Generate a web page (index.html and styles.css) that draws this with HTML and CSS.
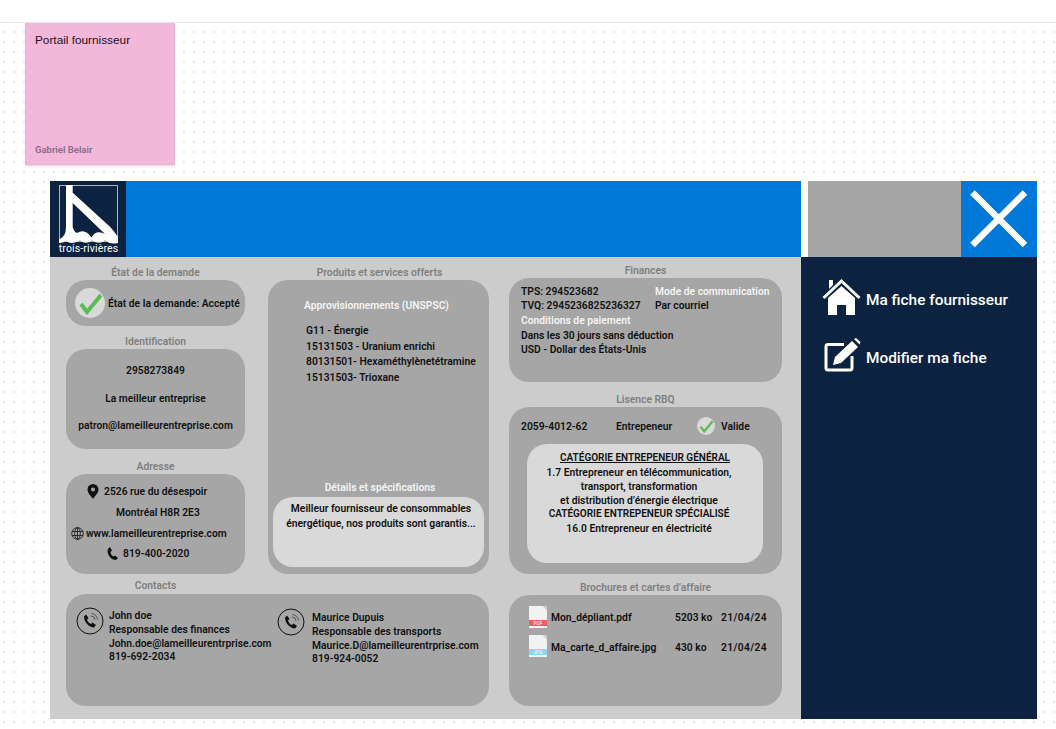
FILE: index.html
```html
<!DOCTYPE html>
<html lang="fr">
<head>
  <meta charset="UTF-8">
  <meta name="viewport" content="width=device-width, initial-scale=1.0">
  <title>Portail fournisseur</title>
  <link rel="stylesheet" href="styles.css">
</head>
<body>
  <div class="topbar"></div>

  <div class="sticky">
    <div class="sticky-title">Portail fournisseur</div>
    <div class="sticky-author">Gabriel Belair</div>
  </div>

  <div class="app">
    <header class="app-header">
      <div class="logo">
        <svg width="76" height="76" viewBox="0 0 76 76">
          <rect x="9.5" y="4.5" width="58" height="56" fill="none" stroke="#a9b2bf"/>
          <path d="M16 4 H22.7 V11.7 L60 45.700 Q64 50 68 56 V62 Q61 64 55 59.500 Q49 64 42 59.500 Q36 64 30 59.500 Q22 64 16 60 Q13 62 9 62 V58 Q16 56 16 46 Z" fill="#fff"/>
          <path d="M22.7 22 L55 53 Q46 48 41.500 56.500 Q35 47 27 52 Q24 51 22.7 46 Z" fill="#0b2340"/>
          <text x="38.500" y="71" class="logo-text">trois-rivières</text>
        </svg>
      </div>
    </header>
    <div class="app-tools">
      <div class="tools-fill"></div>
      <div class="close-btn">
        <svg width="76" height="76" viewBox="0 0 76 76">
          <path d="M11.500 11.500 L64 64 M64 11.500 L11.500 64" stroke="#fff" stroke-width="6.500"/>
        </svg>
      </div>
    </div>

    <main class="content">
      <div class="col col-left">
        <section>
          <h3 class="label">État de la demande</h3>
          <div class="card card-state">
            <svg class="check-icon" width="30" height="30" viewBox="0 0 30 30">
              <circle cx="15" cy="15" r="15" fill="#d9d9d9"/>
              <path d="M6 16 L12 24 L26 7" fill="none" stroke="#5dbb57" stroke-width="4"/>
            </svg>
            <span>État de la demande: Accepté</span>
          </div>
        </section>
        <section class="section-id">
          <h3 class="label">Identification</h3>
          <div class="card card-id">
            <p>2958273849</p>
            <p>La meilleur entreprise</p>
            <p>patron@lameilleurentreprise.com</p>
          </div>
        </section>
        <section class="section-address">
          <h3 class="label">Adresse</h3>
          <div class="card card-address">
            <div class="addr-row addr-street">
              <svg width="12" height="15" viewBox="0 0 12 15">
                <path d="M6 0 A5.500 5.500 0 0 0 .5 5.500 C.5 9 4 12 6 15 C8 12 11.500 9 11.500 5.500 A5.500 5.500 0 0 0 6 0 Z" fill="#111"/>
                <circle cx="6" cy="5.500" r="2" fill="#a6a6a6"/>
              </svg>
              <span>2526 rue du désespoir</span>
            </div>
            <div class="addr-row addr-city"><span>Montréal H8R 2E3</span></div>
            <div class="addr-row addr-web">
              <svg width="13" height="13" viewBox="0 0 13 13" fill="none" stroke="#111" stroke-width=".8">
                <circle cx="6.500" cy="6.500" r="5.800"/>
                <ellipse cx="6.500" cy="6.500" rx="2.800" ry="5.800"/>
                <path d="M6.500 .7 V12.300 M1 4.500 H12 M1 8.500 H12"/>
              </svg>
              <span>www.lameilleurentreprise.com</span>
            </div>
            <div class="addr-row addr-phone">
              <svg width="11" height="13" viewBox="0 0 11 13">
                <path d="M3 0 L5 3.500 L3.500 5 C3.500 7 5 9 6.500 9.500 L8 8.500 L11 11 L9 13 C4 13 .5 8 .5 3.500 Q.5 1.500 3 0 Z" fill="#111"/>
              </svg>
              <span>819-400-2020</span>
            </div>
          </div>
        </section>
      </div>

      <div class="col col-middle">
        <section>
          <h3 class="label label-products">Produits et services offerts</h3>
          <div class="card card-products">
            <h4 class="heading-light heading-unspsc">Approvisionnements (UNSPSC)</h4>
            <ul class="unspsc-list">
              <li>G11 - Énergie</li>
              <li>15131503 - Uranium enrichi</li>
              <li>80131501- Hexaméthylènetétramine</li>
              <li>15131503- Trioxane</li>
            </ul>
            <h4 class="heading-light heading-details">Détails et spécifications</h4>
            <div class="details-box">
              Meilleur fournisseur de consommables<br>énergétique, nos produits sont garantis...
            </div>
          </div>
        </section>
      </div>

      <div class="col col-right">
        <section>
          <h3 class="label">Finances</h3>
          <div class="card card-finance">
            <div class="finance-top">
              <div>
                <p>TPS: 294523682</p>
                <p>TVQ: 2945236825236327</p>
              </div>
              <div>
                <p class="light">Mode de communication</p>
                <p>Par courriel</p>
              </div>
            </div>
            <p class="light finance-terms">Conditions de paiement</p>
            <p>Dans les 30 jours sans déduction</p>
            <p>USD - Dollar des États-Unis</p>
          </div>
        </section>
        <section class="section-rbq">
          <h3 class="label">Lisence RBQ</h3>
          <div class="card card-rbq">
            <div class="rbq-head">
              <span class="rbq-number">2059-4012-62</span>
              <span class="rbq-type">Entrepeneur</span>
              <svg class="rbq-check" width="18" height="18" viewBox="0 0 30 30">
                <circle cx="15" cy="15" r="15" fill="#d9d9d9"/>
                <path d="M6 16 L12 24 L26 7" fill="none" stroke="#5dbb57" stroke-width="4"/>
              </svg>
              <span>Valide</span>
            </div>
            <div class="rbq-box">
              <p class="rbq-title">CATÉGORIE ENTREPENEUR GÉNÉRAL</p>
              <div class="rbq-lines">
                <p>1.7 Entrepreneur en télécommunication,</p>
                <p>transport, transformation</p>
                <p>et distribution d’énergie électrique</p>
                <p class="rbq-caps">CATÉGORIE ENTREPENEUR SPÉCIALISÉ</p>
                <p class="rbq-last">16.0 Entrepreneur en électricité</p>
              </div>
            </div>
          </div>
        </section>
      </div>

      <section class="section-contacts">
        <h3 class="label label-contacts">Contacts</h3>
        <div class="card card-contacts">
          <div class="contact contact-first">
            <svg class="phone-ring" width="28" height="28" viewBox="0 0 28 28">
              <circle cx="14" cy="14" r="13" fill="none" stroke="#111"/>
              <path d="M10 7.500 L12.500 11 L11 12.500 C11.500 14.500 13 16 15 17 L16.500 15.500 L20 18 L18 20.500 C13 20.500 8 15 8 9.500 Z" fill="#111"/>
              <path d="M15 9 A4 4 0 0 1 19 13 M15.500 6.500 A6.500 6.500 0 0 1 21.500 12.500" fill="none" stroke="#333" stroke-width=".7"/>
            </svg>
            <div class="contact-info">
              <p>John doe</p>
              <p>Responsable des finances</p>
              <p>John.doe@lameilleurentrprise.com</p>
              <p>819-692-2034</p>
            </div>
          </div>
          <div class="contact contact-second">
            <svg class="phone-ring" width="28" height="28" viewBox="0 0 28 28">
              <circle cx="14" cy="14" r="13" fill="none" stroke="#111"/>
              <path d="M10 7.500 L12.500 11 L11 12.500 C11.500 14.500 13 16 15 17 L16.500 15.500 L20 18 L18 20.500 C13 20.500 8 15 8 9.500 Z" fill="#111"/>
              <path d="M15 9 A4 4 0 0 1 19 13 M15.500 6.500 A6.500 6.500 0 0 1 21.500 12.500" fill="none" stroke="#333" stroke-width=".7"/>
            </svg>
            <div class="contact-info">
              <p>Maurice Dupuis</p>
              <p>Responsable des transports</p>
              <p>Maurice.D@lameilleurentrprise.com</p>
              <p>819-924-0052</p>
            </div>
          </div>
        </div>
      </section>

      <section class="section-files">
        <h3 class="label">Brochures et cartes d’affaire</h3>
        <div class="card card-files">
          <div class="file-row">
            <div class="file-icon"><span class="file-band band-pdf">PDF</span></div>
            <span>Mon_dépliant.pdf</span>
            <span>5203 ko</span>
            <span class="file-date">21/04/24</span>
          </div>
          <div class="file-row file-row-second">
            <div class="file-icon"><span class="file-band band-jpg">JPG</span></div>
            <span class="file-text">Ma_carte_d_affaire.jpg</span>
            <span class="file-text">430 ko</span>
            <span class="file-date file-text">21/04/24</span>
          </div>
        </div>
      </section>
    </main>

    <nav class="sidenav">
      <a class="nav-item">
        <svg width="40" height="38" viewBox="0 0 40 38">
          <path d="M7 2 H11 V7 L7 11 Z" fill="#fff"/>
          <path d="M1.500 20 L19.500 3 L37.500 20" fill="none" stroke="#fff" stroke-width="3"/>
          <path d="M6 20 L19.500 8 L33 20 V37 H24 V27 H15 V37 H6 Z" fill="#fff"/>
        </svg>
        <span>Ma fiche fournisseur</span>
      </a>
      <a class="nav-item">
        <svg width="40" height="34" viewBox="0 0 40 34">
          <path d="M22 6.500 H6 Q4 6.500 4 8.500 V30 Q4 32 6 32 H28 Q30 32 30 30 V18" fill="none" stroke="#fff" stroke-width="3"/>
          <path d="M11 27 L13 19 L30 3 L36 9 L19 25 Z" fill="#fff"/>
          <path d="M32 1 L34 0 L38.500 4 L37.500 6.500 Z" fill="#fff"/>
        </svg>
        <span>Modifier ma fiche</span>
      </a>
    </nav>
  </div>
</body>
</html>
```

FILE: styles.css
```css
* {
  box-sizing: border-box;
}

body {
  margin: 0;
  height: 729px;
  overflow: hidden;
  font-family: "Roboto", "Liberation Sans", sans-serif;
  font-weight: 600;
  font-size: 10.3px;
  color: #111;
  /* square dots: white stripes over vertical stripes */
  background-color: #fff;
  background-image:
    linear-gradient(to bottom, transparent 2px, #fff 2px),
    linear-gradient(to right, #e6e6e6 2px, transparent 2px);
  background-size: 10px 10px;
  background-position: 0 1px, 3px 0;
}

p, h3, h4, ul {
  margin: 0;
  padding: 0;
}

.topbar {
  height: 23px;
  background: #fff;
  border-bottom: 1px solid #e3e3e3;
}

.sticky {
  width: 150px;
  height: 142px;
  margin-left: 25px;
  padding: 10px 9px 8px;
  display: flex;
  flex-direction: column;
  justify-content: space-between;
  background: #f3b8d9;
  border: 1px solid #ecb0d2;
  border-top: none;
  box-shadow: 0 3px 2px -1px #e8e8e8;
}

.sticky-title {
  font-family: "Liberation Sans", Arial, sans-serif;
  font-weight: 400;
  font-size: 11.8px;
  line-height: 14px;
  color: #1a1020;
}

.sticky-author {
  font-size: 9.5px;
  line-height: 12px;
  color: #8a6a88;
}

.app {
  display: grid;
  grid-template-columns: 751px 236px;
  grid-template-rows: 76px 462px;
  width: 987px;
  margin: 16px 0 0 50px;
}

.app-header {
  background: #0078d7;
}

.logo {
  width: 76px;
  height: 76px;
  background: #0b2340;
}

.logo svg {
  display: block;
}

.logo-text {
  font-family: "Roboto", sans-serif;
  font-size: 10.5px;
  font-weight: 400;
  letter-spacing: .15px;
  fill: #fff;
  text-anchor: middle;
}

.app-tools {
  display: flex;
  padding-left: 7px;
  background: #fff;
}

.tools-fill {
  flex: 1;
  background: #a6a6a6;
}

.close-btn {
  width: 76px;
  height: 76px;
  background: #0078d7;
}

.close-btn svg {
  display: block;
}

.content {
  display: grid;
  grid-template-columns: 182px 221px 273px;
  column-gap: 20px;
  row-gap: 5px;
  grid-template-rows: 311px 127px;
  align-items: end;
  padding: 6px 0 13px 16px;
  background: #ccc;
}

.col-left {
  padding-right: 3px;
}

.label {
  height: 15px;
  font-size: 10.3px;
  font-weight: 600;
  line-height: 16px;
  text-align: center;
  color: #7f7f7f;
}

.label-products {
  padding-left: 2px;
}

.card {
  background: #a6a6a6;
  border-radius: 20px;
}

.card-state {
  display: flex;
  align-items: center;
  height: 46px;
  padding-left: 9px;
  gap: 3px;
}

.section-id {
  margin-top: 8px;
}

.card-id {
  height: 100px;
  padding-top: 15px;
  text-align: center;
}

.card-id p {
  line-height: 14px;
  margin-bottom: 13.5px;
}

.section-address {
  margin-top: 10px;
}

.card-address {
  height: 100px;
  padding-top: 10px;
}

.addr-row {
  display: flex;
  align-items: center;
  height: 14px;
  margin-bottom: 7px;
}

.addr-street {
  padding-left: 21px;
  gap: 5px;
}

.addr-city {
  padding-left: 50px;
}

.addr-web {
  padding-left: 5px;
  gap: 2px;
}

.addr-phone {
  padding-left: 41px;
  gap: 5px;
  margin-top: -1px;
}

.card-products {
  display: flex;
  flex-direction: column;
  height: 294px;
  padding: 18px 5px 7px;
}

.heading-light {
  font-size: 10.3px;
  font-weight: 600;
  line-height: 15px;
  color: #f4f4f4;
}

.heading-unspsc {
  padding-left: 31px;
}

.unspsc-list {
  list-style: none;
  margin-top: 10px;
  padding-left: 33px;
  line-height: 15.6px;
}

.heading-details {
  margin-top: auto;
  text-align: center;
  padding-left: 3px;
}

.details-box {
  height: 70px;
  margin-top: 2px;
  padding-top: 5px;
  padding-left: 5px;
  border-radius: 20px;
  background: #d9d9d9;
  line-height: 14.5px;
  text-align: center;
}

.card-finance {
  height: 104px;
  padding: 7px 12px;
  line-height: 14.2px;
}

.finance-top {
  display: grid;
  grid-template-columns: 134px 1fr;
  white-space: nowrap;
}

.finance-terms {
  margin-top: 1px;
}

.light {
  color: #f4f4f4;
}

.section-rbq {
  margin-top: 10px;
}

.card-rbq {
  height: 167px;
  padding: 11px 19px 11px 18px;
}

.rbq-head {
  display: flex;
  align-items: center;
  height: 16px;
  margin-left: -6px;
}

.rbq-number {
  width: 95px;
}

.rbq-type {
  width: 81px;
}

.rbq-check {
  margin-right: 6px;
}

.rbq-box {
  height: 119px;
  margin-top: 10px;
  padding-top: 7px;
  border-radius: 20px;
  background: #d9d9d9;
  text-align: center;
  line-height: 14px;
}

.rbq-title {
  font-size: 10px;
  text-decoration: underline;
}

.rbq-lines {
  margin-top: 1px;
  padding-right: 12px;
  line-height: 13.8px;
}

.rbq-caps {
  font-size: 10px;
}

.rbq-last {
  margin-top: 1px;
}

.section-contacts {
  grid-column: 1 / 3;
}

.label-contacts {
  width: 179px;
  line-height: 13px;
}

.card-contacts {
  display: flex;
  height: 112px;
}

.contact {
  display: flex;
  gap: 5px;
  padding-left: 10px;
}

.contact-first {
  width: 211px;
  padding-top: 13px;
}

.contact-second {
  padding-left: 0;
  padding-top: 14px;
  gap: 7px;
}

.phone-ring {
  flex-shrink: 0;
}

.contact-info {
  padding-top: 2px;
  line-height: 13.8px;
}

.contact-second .contact-info {
  padding-top: 3px;
}

.card-files {
  height: 111px;
  padding: 11px 14px 0 20px;
}

.file-row {
  display: grid;
  grid-template-columns: 18px 120px 42px 1fr;
  column-gap: 4px;
  align-items: center;
  height: 22px;
  margin-bottom: 7px;
}

.file-text {
  padding-top: 3px;
}

.file-date {
  letter-spacing: .35px;
}

.file-icon {
  position: relative;
  width: 18px;
  height: 22px;
  background: linear-gradient(225deg, #ccc 0, #ccc 3px, #f2f2f2 3px);
}

.file-band {
  position: absolute;
  left: 0;
  right: 0;
  top: 14px;
  height: 6px;
  font-size: 5px;
  line-height: 6px;
  text-align: center;
  color: #f6d8da;
}

.band-pdf {
  background: #ee5d68;
}

.band-jpg {
  background: #93d1f5;
  color: #e2f3fc;
}

.sidenav {
  display: flex;
  flex-direction: column;
  padding: 21px 0 0 21px;
  background: #0b2340;
}

.nav-item {
  display: flex;
  align-items: center;
  gap: 4px;
  height: 38px;
  margin-bottom: 20px;
  font-size: 15.4px;
  font-weight: 500;
  color: #fff;
}

.nav-item span {
  padding-top: 5px;
}
```
